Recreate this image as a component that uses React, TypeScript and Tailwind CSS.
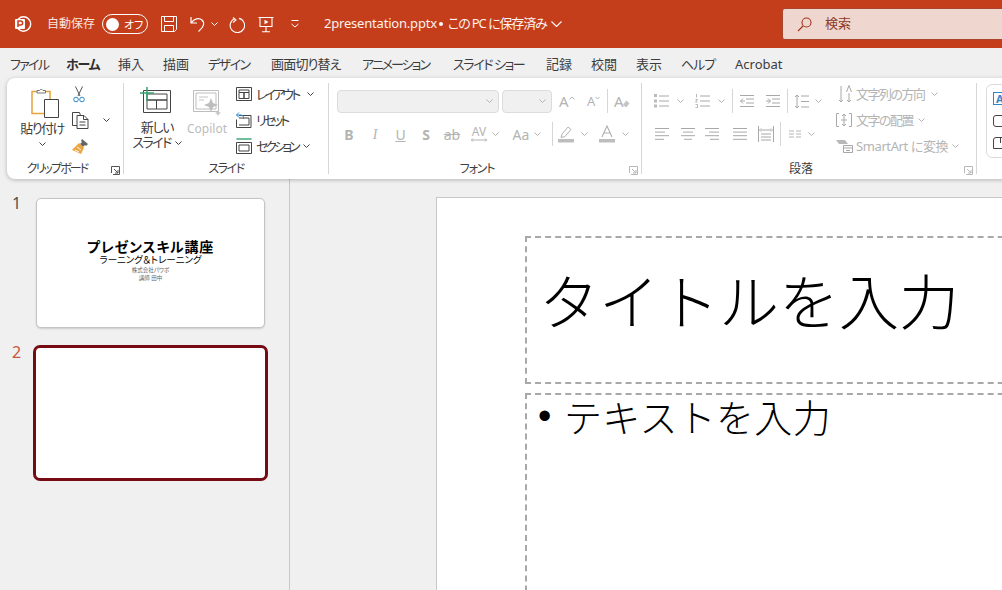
import * as React from "react";

const tabs = [
  { label: "ファイル", cls: "w-[37px] tracking-[-1.7px]" },
  { label: "ホーム", cls: "w-[33px] font-bold text-[#303030] border-[#c43e1c] tracking-[-1.3px]" },
  { label: "挿入", cls: "w-[26px]" },
  { label: "描画", cls: "w-[26px]" },
  { label: "デザイン", cls: "w-[44px] tracking-[-1.5px]" },
  { label: "画面切り替え", cls: "w-[72px] tracking-[-0.8px]" },
  { label: "アニメーション", cls: "w-[72px] tracking-[-2px]" },
  { label: "スライド ショー", cls: "w-[74px] tracking-[-1.4px]" },
  { label: "記録", cls: "w-[26px]" },
  { label: "校閲", cls: "w-[26px]" },
  { label: "表示", cls: "w-[26px]" },
  { label: "ヘルプ", cls: "w-[35px] tracking-[-1px]" },
  { label: "Acrobat", cls: "w-[50px]" },
];

function Chevron({ className = "" }: { className?: string }) {
  return (
    <svg width="7" height="4" viewBox="0 0 7 4" fill="none" stroke="currentColor" strokeWidth="1" className={`shrink-0 ${className}`}>
      <path d="M.5.5l3 3 3-3" />
    </svg>
  );
}

function Launcher({ muted }: { muted?: boolean }) {
  return (
    <svg width="9" height="9" viewBox="0 0 9 9" fill="none" stroke={muted ? "#b8b8b8" : "#555"} strokeWidth="1">
      <path d="M.5 7V.5h8v8H2M3 3l4 4M7 4v3H4" />
    </svg>
  );
}

function Lines({ rows }: { rows: [number, number][] }) {
  // rows of [x, width] on a 15px wide icon, muted ribbon look
  return (
    <svg width="15" height="14" viewBox="0 0 15 14" stroke="#a8a8a8" strokeWidth="1" className="shrink-0">
      {rows.map(([x, w], i) => (
        <path key={i} d={`M${x} ${1.5 + i * (rows.length === 4 ? 3.6 : 5)}h${w}`} />
      ))}
    </svg>
  );
}

function Group({ className, label, labelCls = "", launcher, muted, children }: { className: string; label: string; labelCls?: string; launcher?: boolean; muted?: boolean; children: React.ReactNode }) {
  return (
    <div className={`mt-[5px] flex h-[91px] shrink-0 flex-col border-r border-[#d6d6d6] ${className}`}>
      <div className="h-[79px] shrink-0">{children}</div>
      <div className="flex h-[14px] shrink-0 items-center">
        <div className={`flex-1 text-center text-[12px] leading-[14px] text-[#404040] ${labelCls}`}>{label}</div>
        {launcher && (
          <div className="flex w-[16px] justify-end pt-[2px] pr-[3px]">
            <Launcher muted={muted} />
          </div>
        )}
      </div>
    </div>
  );
}

function TitleBar() {
  return (
    <div className="flex h-12 shrink-0 items-center bg-[#c43e1c] text-white">
      <svg width="18" height="18" viewBox="0 0 18 18" className="ml-[14px] shrink-0">
        <circle cx="9.5" cy="9" r="7.2" fill="none" stroke="#fff" strokeWidth="1.4" />
        <rect x="1" y="4" width="10" height="10" rx="1" fill="#fff" />
        <path d="M4 12V6h2.6a2 2 0 0 1 0 4H4" fill="none" stroke="#c43e1c" strokeWidth="1.5" />
      </svg>
      <span className="ml-[15px] w-[48px] text-[12px] whitespace-nowrap text-[#fbe4dd]">自動保存</span>
      <div className="ml-[7px] flex h-[20px] w-[46px] shrink-0 items-center rounded-full border border-white pl-[3px]">
        <span className="h-[13px] w-[13px] rounded-full bg-white" />
        <span className="ml-[5px] text-[11px] leading-none">オフ</span>
      </div>
      <svg width="18" height="18" viewBox="0 0 18 18" fill="none" stroke="#fff" strokeWidth="1" className="ml-[12px] shrink-0">
        <path d="M1.5 1.5h15v13l-2 2h-13zM4.5 1.5v5h9v-5M4.5 16.5v-6h9v6" />
      </svg>
      <svg width="16" height="18" viewBox="0 0 16 18" fill="none" stroke="#fff" strokeWidth="1.2" className="ml-[12px] shrink-0">
        <path d="M1 2v6h6M1.500 7.500C4 3.500 9 2.500 12 5c3 3 2 7-3.500 11.500" />
      </svg>
      <Chevron className="ml-[5px] text-white" />
      <svg width="17" height="17" viewBox="0 0 17 17" fill="none" stroke="#fff" strokeWidth="1.1" className="ml-[10px] shrink-0">
        <path d="M5 1.500l3 2.500-3 2.500M6.500 2.800A7.200 7.200 0 1 0 11 2.400" />
      </svg>
      <svg width="16" height="17" viewBox="0 0 16 17" fill="none" stroke="#fff" strokeWidth="1.1" className="ml-[13px] shrink-0">
        <path d="M.5 1.500h15M2 1.500v9h12v-9M8 10.500v5M4 15.800h8" />
        <path d="M6.500 3.700l4 2.300-4 2.300z" fill="#fff" stroke="none" />
      </svg>
      <svg width="10" height="8" viewBox="0 0 10 8" fill="none" stroke="#fff" strokeWidth="1" className="ml-[16px] shrink-0">
        <path d="M1.500.5h7M1.500 4l3.500 3 3.500-3" />
      </svg>
      <span className="ml-[24px] flex items-center text-[13px] whitespace-nowrap text-[#fdf1ed]">
        <span className="w-[115px] tracking-[-0.2px]">2presentation.pptx</span>
        <span className="mr-[5px] h-[4px] w-[4px] rounded-full bg-white" />
        <span className="w-[99px] tracking-[-1.1px]">この PC に保存済み</span>
        <svg width="11" height="6" viewBox="0 0 11 6" fill="none" stroke="#fff" strokeWidth="1.1" className="ml-[4px]">
          <path d="M.5.5l5 5 5-5" />
        </svg>
      </span>
      <div className="ml-[220px] flex h-8 w-[300px] shrink-0 items-center rounded-[3px] border border-[#a9452c] bg-[#efd6cf] pl-[14px]">
        <svg width="15" height="15" viewBox="0 0 15 15" fill="none" stroke="#a0341a" strokeWidth="1.1" className="shrink-0">
          <circle cx="9.500" cy="5.500" r="4.500" />
          <path d="M6 9L1 14" />
        </svg>
        <span className="ml-[13px] text-[13px] text-[#8b3a26]">検索</span>
      </div>
    </div>
  );
}

function TabRow() {
  return (
    <div className="flex h-[30px] shrink-0 items-start gap-[19px] bg-[#f0f0f0] pl-[10px] text-[13px] text-[#3c3c3c]">
      {tabs.map((t) => (
        <div key={t.label} className={`flex h-[27px] items-center border-b-2 border-transparent pt-[8px] whitespace-nowrap ${t.cls}`}>
          {t.label}
        </div>
      ))}
    </div>
  );
}

function ClipboardGroup() {
  return (
    <Group className="w-[117px]" label="クリップボード" labelCls="tracking-[-1.9px]" launcher>
      <div className="flex">
        <div className="ml-[7px] flex w-[56px] flex-col items-center text-[#404040]">
          <svg width="28" height="31" viewBox="0 0 28 31" fill="none" className="mt-[4px] ml-[5px]">
            <path d="M1 4.500h18v22H1z" fill="#fff" stroke="#e8a33d" strokeWidth="1.500" />
            <path d="M6 6V3.500h2.500a2 2 0 0 1 3.500 0H14.500V6z" fill="#fff" stroke="#777" strokeWidth="1" />
            <path d="M13.500 12.500h14v18h-14z" fill="#fff" stroke="#444" strokeWidth="1" />
          </svg>
          <span className="mt-[3px] text-[13px] leading-[15px] tracking-[-1.500px] whitespace-nowrap">貼り付け</span>
          <Chevron className="mt-[6px] text-[#444]" />
        </div>
        <div className="-mt-[2px] flex flex-col">
          <div className="flex h-[26px] items-center pl-[3px]">
            <svg width="12" height="17" viewBox="0 0 12 17" fill="none" strokeWidth="1">
              <path d="M2.500.5L7 10M9.500.5L5 10" stroke="#555" />
              <circle cx="3" cy="13.500" r="2.300" stroke="#2e86c9" />
              <circle cx="9" cy="13.500" r="2.300" stroke="#2e86c9" />
            </svg>
          </div>
          <div className="flex h-[26px] items-center pl-[2px]">
            <svg width="17" height="17" viewBox="0 0 17 17" fill="none" stroke="#444" strokeWidth="1">
              <path d="M5 13.500H.5V.5h7l1 3M5 3.500h7l4 4v9H5zM11.500 3.500v4h4.500M7.500 10h6M7.500 13h6" />
            </svg>
            <Chevron className="ml-[14px] text-[#444]" />
          </div>
          <div className="flex h-[26px] items-center pl-[2px]">
            <svg width="17" height="17" viewBox="0 0 17 17">
              <path d="M10 1l6 5-2 2-1-1-2 2-3-3 2-2-1-1z" fill="#666" />
              <path d="M7 5l5 5-3 6L0 12z" fill="#eda33f" />
              <path d="M3 12l4 2M5 9l4 3" stroke="#fff" strokeWidth="1" />
            </svg>
          </div>
        </div>
      </div>
    </Group>
  );
}

function SlideGroup() {
  const dark = "text-[13px] leading-[15px] whitespace-nowrap text-[#404040]";
  return (
    <Group className="w-[205px]" label="スライド" labelCls="tracking-[-1.5px]">
      <div className="flex">
        <div className="ml-[9px] flex w-[48px] flex-col items-center">
          <svg width="31" height="26" viewBox="0 0 31 26" fill="none" className="mt-[4px] -ml-[3px]">
            <path d="M3.500 3.500h27v22h-27zM7 7h20v6H7zM7 13h9.500v9H7zM16.500 13H27v9H16.500z" stroke="#444" strokeWidth="1" />
            <path d="M0 6h14M7 0v14" stroke="#34a36a" strokeWidth="1.500" />
          </svg>
          <span className={`mt-[7px] tracking-[-1.300px] ${dark}`}>新しい</span>
          <span className={`flex items-center tracking-[-1.600px] ${dark}`}>
            スライド
            <Chevron className="ml-[4px]" />
          </span>
        </div>
        <div className="ml-[6px] flex w-[40px] flex-col items-center">
          <svg width="28" height="26" viewBox="0 0 28 26" fill="none" className="mt-[7px]">
            <path d="M.5.5h25v21H.5zM3 3h20v16H3z" stroke="#bdbdbd" strokeWidth="1" />
            <path d="M6 7h9M6 10h5" stroke="#c4c4c4" strokeWidth="1" />
            <path d="M18 8l2 5 5 2-5 2-2 5-2-5-5-2 5-2z" fill="#bdbdbd" />
            <path d="M25 20l1 2 2 1-2 1-1 2-1-2-2-1 2-1z" fill="#c4c4c4" />
          </svg>
          <span className="mt-[5px] text-[12px] leading-[15px] text-[#bcbcbc]">Copilot</span>
        </div>
        <div className="-mt-[2px] ml-[9px] flex flex-col">
          <div className={`flex h-[26px] items-center ${dark}`}>
            <svg width="16" height="14" viewBox="0 0 16 14" fill="none" stroke="#444" strokeWidth="1" className="shrink-0">
              <path d="M.5.5h15v13H.5zM3 3h10v2.500H3zM3 5.500h5v6H3zM8 5.500h5v6H8z" />
            </svg>
            <span className="ml-[4px] w-[51px] tracking-[-2.900px]">レイアウト</span>
            <Chevron />
          </div>
          <div className={`flex h-[26px] items-center ${dark}`}>
            <svg width="16" height="16" viewBox="0 0 16 16" fill="none" strokeWidth="1" className="shrink-0">
              <path d="M3 3.500h12v12H.5v-8M3 6h10v7H3" stroke="#444" />
              <path d="M3 .5L.5 3 3 5.500M.5 3H5a2.500 2.500 0 0 1 2.500 2.500V7" stroke="#2e86c9" />
            </svg>
            <span className="ml-[4px] tracking-[-3px]">リセット</span>
          </div>
          <div className={`flex h-[26px] items-center ${dark}`}>
            <svg width="16" height="16" viewBox="0 0 16 16" fill="none" strokeWidth="1" className="shrink-0">
              <path d="M.5 1h15" stroke="#3fa777" strokeWidth="1.500" />
              <path d="M.5 4.500h15v11H.5zM3 7h10v6H3z" stroke="#444" />
            </svg>
            <span className="ml-[4px] w-[47px] tracking-[-3.200px]">セクション</span>
            <Chevron />
          </div>
        </div>
      </div>
    </Group>
  );
}

function FontGroup() {
  const g = "text-[#b4b4b4]";
  return (
    <Group className="w-[313px]" label="フォント" labelCls="tracking-[-1.2px]" launcher muted>
      <div className={`mt-[5px] flex h-[26px] items-center pl-[8px] ${g}`}>
        <div className="flex h-[23px] w-[162px] items-center justify-end rounded-[4px] border border-[#dcdcdc] bg-[#f0f0f0] pr-[5px]">
          <Chevron />
        </div>
        <div className="ml-[3px] flex h-[23px] w-[50px] items-center justify-end rounded-[4px] border border-[#dcdcdc] bg-[#f0f0f0] pr-[5px]">
          <Chevron />
        </div>
        <span className="ml-[7px] flex w-[18px] items-start">
          <span className="text-[15px] leading-none">A</span>
          <svg width="6" height="4" viewBox="0 0 6 4" fill="none" stroke="currentColor" strokeWidth="1" className="mt-[2px]"><path d="M.5 3.500L3 1l2.500 2.500" /></svg>
        </span>
        <span className="ml-[10px] flex w-[15px] items-start">
          <span className="text-[13px] leading-none">A</span>
          <svg width="5" height="4" viewBox="0 0 5 4" fill="none" stroke="currentColor" strokeWidth="1" className="mt-[1px]"><path d="M.5 1L2.500 3 4.500 1" /></svg>
        </span>
        <span className="ml-[5px] h-[24px] w-px bg-[#d6d6d6]" />
        <span className="ml-[6px] flex w-[17px] items-center">
          <span className="text-[15px] leading-none">A</span>
          <svg width="8" height="8" viewBox="0 0 8 8" className="mt-[5px] -ml-[2px]"><path d="M4.500.5l3 3-3.500 4-3-3z" fill="#c4c4c4" /></svg>
        </span>
      </div>
      <div className={`mt-[7px] flex h-[26px] items-center pl-[7px] text-[14px] ${g}`}>
        <span className="w-[26px] text-center font-bold">B</span>
        <span className="w-[26px] text-center [font-family:'Liberation_Serif',serif] italic">I</span>
        <span className="w-[25px] text-center underline">U</span>
        <span className="w-[26px] text-center font-bold">S</span>
        <span className="w-[26px] text-center line-through">ab</span>
        <span className="ml-[5px] flex w-[18px] flex-col items-center text-[12px] leading-[12px]">
          AV
          <svg width="16" height="4" viewBox="0 0 16 4" fill="none" stroke="currentColor" strokeWidth="1"><path d="M0 2h16M2 .5L.5 2 2 3.500M14 .5L15.500 2 14 3.500" /></svg>
        </span>
        <Chevron className="ml-[4px]" />
        <span className="ml-[13px] w-[18px] text-center">Aa</span>
        <Chevron className="ml-[4px]" />
        <span className="ml-[11px] h-[24px] w-px bg-[#d6d6d6]" />
        <svg width="16" height="18" viewBox="0 0 16 18" fill="none" className="ml-[5px] shrink-0">
          <path d="M4 9l6-7 3 2.500-6 7-4 1z" stroke="#b4b4b4" strokeWidth="1" />
          <path d="M0 14h16v3.500H0z" fill="#bdbdbd" />
        </svg>
        <Chevron className="ml-[7px]" />
        <svg width="16" height="18" viewBox="0 0 16 18" fill="none" className="ml-[11px] shrink-0">
          <path d="M3 12L8 1l5 11M5 8h6" stroke="#b0b0b0" strokeWidth="1.100" />
          <path d="M0 14h16v3.500H0z" fill="#bdbdbd" />
        </svg>
        <Chevron className="ml-[7px]" />
      </div>
    </Group>
  );
}

function ParagraphGroup() {
  const full: [number, number][] = [[0, 14], [0, 14], [0, 14], [0, 14]];
  return (
    <Group className="w-[335px]" label="段落" launcher muted>
      <div className="flex text-[#b4b4b4]">
        <div className="w-[194px] shrink-0">
          <div className="mt-[5px] flex h-[26px] items-center pl-[12px]">
            <svg width="15" height="14" viewBox="0 0 15 14" stroke="#a8a8a8" className="shrink-0">
              <path d="M5 2h10M5 7h10M5 12h10" />
              <path d="M0 0h3v3H0zM0 5.500h3v3H0zM0 10.500h3v3H0z" fill="#bbb" stroke="none" />
            </svg>
            <Chevron className="ml-[8px]" />
            <svg width="15" height="14" viewBox="0 0 15 14" stroke="#a8a8a8" className="ml-[11px] shrink-0">
              <path d="M5 2h10M5 7h10M5 12h10" />
              <path d="M1.500 0v3.500M.5 5.500h2l-2 2.500h2M.5 10.500h2v3h-2" fill="none" strokeWidth=".8" />
            </svg>
            <Chevron className="ml-[8px]" />
            <span className="ml-[7px] h-[24px] w-px bg-[#d6d6d6]" />
            <svg width="14" height="14" viewBox="0 0 14 14" fill="none" stroke="#a8a8a8" className="ml-[7px] shrink-0">
              <path d="M0 1.500h14M6 5h8M6 9h8M0 12.500h14M5 7H.5M3 4.500L.5 7 3 9.500" />
            </svg>
            <svg width="14" height="14" viewBox="0 0 14 14" fill="none" stroke="#a8a8a8" className="ml-[12px] shrink-0">
              <path d="M0 1.500h14M6 5h8M6 9h8M0 12.500h14M0 7h4.500M2 4.500L4.500 7 2 9.500" />
            </svg>
            <span className="ml-[7px] h-[24px] w-px bg-[#d6d6d6]" />
            <svg width="15" height="15" viewBox="0 0 15 15" fill="none" stroke="#a8a8a8" className="ml-[6px] shrink-0">
              <path d="M3 1v13M1 3l2-2 2 2M1 12l2 2 2-2M7 2h8M7 7.500h8M7 13h8" />
            </svg>
            <Chevron className="ml-[6px]" />
          </div>
          <div className="mt-[7px] flex h-[26px] items-center pl-[13px]">
            <Lines rows={[[0, 14], [0, 10], [0, 14], [0, 9]]} />
            <span className="ml-[11px]"><Lines rows={[[0, 14], [2, 10], [0, 14], [3, 8]]} /></span>
            <span className="ml-[9px]"><Lines rows={[[0, 14], [4, 10], [0, 14], [5, 9]]} /></span>
            <span className="ml-[13px]"><Lines rows={full} /></span>
            <svg width="16" height="16" viewBox="0 0 16 16" fill="none" stroke="#a8a8a8" className="ml-[10px] shrink-0">
              <path d="M.5 0v16M15.500 0v16M3 4h10M3 2.500L1.500 4 3 5.500M13 2.500L14.500 4 13 5.500M3 8h10M3 11h10M3 14h10" />
            </svg>
            <span className="ml-[6px] h-[24px] w-px bg-[#d6d6d6]" />
            <svg width="12" height="8" viewBox="0 0 12 8" stroke="#b4b4b4" className="ml-[8px] shrink-0">
              <path d="M0 1h5M7 1h5M0 4h5M7 4h5M0 7h5M7 7h5" />
            </svg>
            <Chevron className="ml-[7px]" />
          </div>
        </div>
        <div className="-mt-[2px] flex flex-col text-[13px] leading-[15px] whitespace-nowrap">
          <div className="flex h-[26px] items-center">
            <svg width="14" height="18" viewBox="0 0 14 18" fill="none" stroke="#a8a8a8" className="ml-[2px] shrink-0">
              <path d="M3 1v16M1 15l2 2 2-2M11 8v9M9 15l2 2 2-2M8.500 7L11 .5 13.500 7" />
            </svg>
            <span className="ml-[4px] w-[75px] tracking-[-1.500px]">文字列の方向</span>
            <Chevron />
          </div>
          <div className="flex h-[26px] items-center">
            <svg width="16" height="14" viewBox="0 0 16 14" fill="none" stroke="#a8a8a8" className="shrink-0">
              <path d="M3 .5H.5v13H3M13 .5h2.500v13H13M8 1v12M6 3l2-2 2 2M6 11l2 2 2-2M5 7h6" />
            </svg>
            <span className="ml-[4px] w-[62px] tracking-[-1.500px]">文字の配置</span>
            <Chevron />
          </div>
          <div className="flex h-[26px] items-center">
            <svg width="17" height="14" viewBox="0 0 17 14" fill="none" className="shrink-0">
              <path d="M0 1h9l3 4H3z" fill="#b8b8b8" />
              <path d="M7.500 6.500h9v7h-9zM7.500 9h9M10 11.500h4" stroke="#a8a8a8" />
            </svg>
            <span className="ml-[3px] w-[96px] tracking-[-0.4px]">SmartArt に変換</span>
            <Chevron />
          </div>
        </div>
      </div>
    </Group>
  );
}

function DrawingGroup() {
  return (
    <div className="mt-[6px] ml-[9px] flex h-[74px] w-[60px] shrink-0 flex-col gap-[10px] rounded-l-[6px] border border-[#dcdcdc] py-[7px] pl-[6px]">
      <div className="flex h-[13px] w-[30px] items-center border border-[#2e86c9] pl-[2px] text-[11px] leading-none font-bold text-[#2e86c9]">A</div>
      <div className="h-[12px] w-[30px] rounded-[3px] border border-[#444]" />
      <div className="h-[12px] w-[30px] rounded-t-[3px] border border-[#444] pl-[6px]">
        <div className="h-[5px] w-px bg-[#444]" />
      </div>
    </div>
  );
}

function Thumbnails() {
  return (
    <div className="w-[290px] shrink-0 border-r border-[#c8c8c8] pt-[19px]">
      <div className="flex">
        <div className="w-[36px] pl-[12px] text-[16px] leading-[10px] text-[#505050]">1</div>
        <div className="flex h-[130px] w-[229px] flex-col items-center justify-center rounded-[5px] border border-[#c4c4c4] bg-white pb-[6px] text-black shadow-[0_1px_2px_rgba(0,0,0,0.15)]">
          <span className="text-[14px] leading-[15px] font-bold tracking-[0.8px] whitespace-nowrap">プレゼンスキル講座</span>
          <span className="text-[9.500px] leading-[11px] whitespace-nowrap">ラーニング＆トレーニング</span>
          <span className="mt-[1px] text-[5.500px] leading-[8px] text-[#666]">株式会社パワポ</span>
          <span className="text-[5.500px] leading-[8px] text-[#666]">講師 田中</span>
        </div>
      </div>
      <div className="mt-[17px] flex">
        <div className="w-[33px] pt-[1px] pl-[12px] text-[16px] leading-[12px] text-[#c8553a]">2</div>
        <div className="h-[136px] w-[235px] rounded-[7px] border-[3px] border-[#760b14] bg-white" />
      </div>
    </div>
  );
}

function SlideCanvas() {
  return (
    <div className="min-w-0 flex-1 pt-[18px] pl-[146px]">
      <div className="flex h-[460px] w-[800px] flex-col gap-[9px] border border-[#c8c8c8] bg-white pt-[38px] pl-[88px] [font-family:'Noto_Sans_CJK_JP',sans-serif] [font-feature-settings:normal] text-black">
        <div className="flex h-[148px] w-[700px] shrink-0 items-center border-2 border-dashed border-[#a8a8a8] pb-[22px] pl-[12px] text-[60px] leading-none font-light whitespace-nowrap">
          タイトルを入力
        </div>
        <div className="flex h-[300px] w-[700px] shrink-0 items-start border-2 border-dashed border-[#a8a8a8] pl-[11px] text-[38px] leading-[42px] font-light tracking-[0.3px] whitespace-nowrap">
          <span className="w-[26px] [font-family:'Liberation_Sans',sans-serif]">•</span>
          <span>テキストを入力</span>
        </div>
      </div>
    </div>
  );
}

export default function App() {
  return (
    <div className="flex h-[590px] w-[1002px] flex-col overflow-hidden bg-[#f0f0f0] [font-family:'Noto_Sans','Noto_Sans_CJK_JP',sans-serif] [font-feature-settings:'palt']">
      <TitleBar />
      <TabRow />
      <div className="relative z-10 ml-[7px] flex h-[101px] w-[1040px] shrink-0 rounded-[8px] bg-white shadow-[0_1px_4px_rgba(0,0,0,0.25)]">
        <ClipboardGroup />
        <SlideGroup />
        <FontGroup />
        <ParagraphGroup />
        <DrawingGroup />
      </div>
      <div className="flex min-h-0 flex-1">
        <Thumbnails />
        <SlideCanvas />
      </div>
    </div>
  );
}
